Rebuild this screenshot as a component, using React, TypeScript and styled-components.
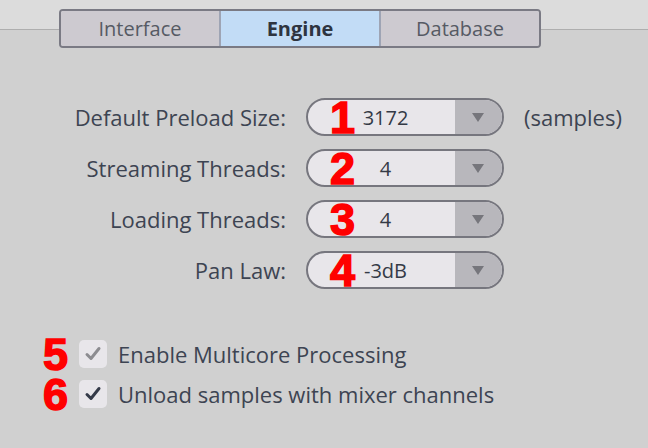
import { Fragment } from 'react';
import styled, { createGlobalStyle } from 'styled-components';

const GlobalStyle = createGlobalStyle`
  html, body {
    margin: 0;
    padding: 0;
  }
  body {
    width: 648px;
    height: 448px;
    overflow: hidden;
    font-family: 'Open Sans', 'Noto Sans', sans-serif;
    background: linear-gradient(
      to bottom,
      #dcdcdc 0px,
      #dcdcdc 29px,
      #aeaeae 29px,
      #aeaeae 30px,
      #d0d0d0 30px
    );
  }
`;

const Page = styled.div`
  display: flex;
  flex-direction: column;
  height: 448px;
`;

const TabBar = styled.div`
  display: flex;
  align-self: flex-start;
  margin: 9px 0 0 59px;
  border: 2px solid #7a7a84;
  border-radius: 4px;
  overflow: hidden;
`;

const Tab = styled.div<{ $active?: boolean }>`
  width: 158px;
  height: 35px;
  display: flex;
  align-items: center;
  justify-content: center;
  font-size: 20px;
  font-weight: ${({ $active }) => ($active ? 700 : 400)};
  color: ${({ $active }) => ($active ? '#2e3440' : '#565a64')};
  background: ${({ $active }) => ($active ? '#c2dcf6' : '#cdcad0')};
  & + & {
    border-left: 2px solid #9ea4b4;
  }
`;

const Form = styled.div`
  display: grid;
  grid-template-columns: 286px 198px auto;
  grid-auto-rows: 38px;
  column-gap: 20px;
  row-gap: 13px;
  align-items: center;
  margin-top: 50px;
`;

const Label = styled.div`
  text-align: right;
  font-size: 22px;
  color: #3d4452;
`;

const Combo = styled.div`
  position: relative;
  height: 34px;
  display: flex;
  border: 2px solid #76767e;
  border-radius: 19px;
  background: #e8e6ea;
`;

const ComboValue = styled.div`
  flex: 1;
  display: flex;
  align-items: center;
  justify-content: center;
  padding-left: 8px;
  font-size: 20px;
  color: #343a46;
`;

const ComboArrow = styled.div`
  width: 47px;
  display: flex;
  align-items: center;
  justify-content: center;
  background: #b8b7bc;
  border-radius: 0 17px 17px 0;
  &::after {
    content: '';
    border-left: 6px solid transparent;
    border-right: 6px solid transparent;
    border-top: 9px solid #76767c;
    margin-right: 2px;
  }
`;

const Marker = styled.span`
  font-family: 'Liberation Sans', Arial, sans-serif;
  font-weight: 700;
  font-size: 45px;
  line-height: 40px;
  color: #ff0000;
  -webkit-text-stroke: 1.5px #ff0000;
`;

const ComboMarker = styled(Marker)`
  position: absolute;
  left: 22px;
  top: -2px;
`;

const Unit = styled.div`
  font-size: 22px;
  color: #3d4452;
`;

const Checks = styled.div`
  display: flex;
  flex-direction: column;
  gap: 12px;
  margin: 51px 0 0 43px;
`;

const CheckRow = styled.div`
  height: 28px;
  display: flex;
  align-items: center;
  gap: 11px;
`;

const CheckMarker = styled(Marker)`
  width: 25px;
  line-height: 28px;
  margin-top: 2px;
`;

const Box = styled.div<{ $disabled?: boolean }>`
  width: 28px;
  height: 28px;
  border-radius: 5px;
  background: #e8e6ea;
  display: flex;
  align-items: center;
  justify-content: center;
  color: ${({ $disabled }) => ($disabled ? '#8c8c90' : '#343a48')};
`;

const CheckText = styled.div`
  font-size: 22px;
  line-height: 28px;
  color: #3d4452;
`;

const Check = () => (
  <svg width="18" height="18" viewBox="0 0 18 18">
    <path
      d="M3 9.5 L7 13.5 L15 3.5"
      fill="none"
      stroke="currentColor"
      strokeWidth="3"
      strokeLinecap="round"
      strokeLinejoin="round"
    />
  </svg>
);

const rows = [
  { label: 'Default Preload Size:', value: '3172', unit: '(samples)' },
  { label: 'Streaming Threads:', value: '4' },
  { label: 'Loading Threads:', value: '4' },
  { label: 'Pan Law:', value: '-3dB' },
];

export default function App() {
  return (
    <>
      <GlobalStyle />
      <Page>
        <TabBar>
          <Tab>Interface</Tab>
          <Tab $active>Engine</Tab>
          <Tab>Database</Tab>
        </TabBar>

        <Form>
          {rows.map((row, i) => (
            <Fragment key={row.label}>
              <Label>{row.label}</Label>
              <Combo>
                <ComboMarker>{i + 1}</ComboMarker>
                <ComboValue>{row.value}</ComboValue>
                <ComboArrow />
              </Combo>
              <Unit>{row.unit ?? ''}</Unit>
            </Fragment>
          ))}
        </Form>

        <Checks>
          <CheckRow>
            <CheckMarker>5</CheckMarker>
            <Box $disabled>
              <Check />
            </Box>
            <CheckText>Enable Multicore Processing</CheckText>
          </CheckRow>
          <CheckRow>
            <CheckMarker>6</CheckMarker>
            <Box>
              <Check />
            </Box>
            <CheckText>Unload samples with mixer channels</CheckText>
          </CheckRow>
        </Checks>
      </Page>
    </>
  );
}
